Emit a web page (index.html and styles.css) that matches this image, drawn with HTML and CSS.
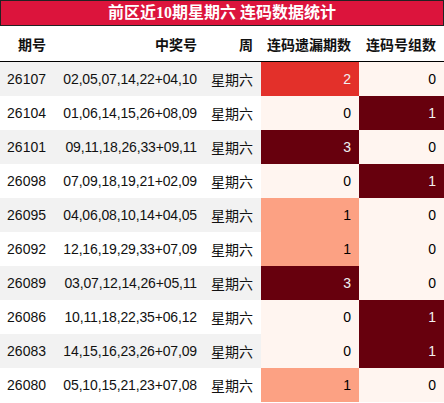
FILE: index.html
```
<!DOCTYPE html>
<html lang="zh">
<head>
<meta charset="utf-8">
<link rel="stylesheet" href="styles.css">
</head>
<body>
<div class="wrap">
  <div class="title">前区近10期星期六 连码数据统计</div>
  <table class="stats">
    <colgroup>
      <col class="c1"><col class="c2"><col class="c3"><col class="c4"><col class="c5">
    </colgroup>
    <thead>
      <tr><th>期号</th><th>中奖号</th><th>周</th><th>连码遗漏期数</th><th>连码号组数</th></tr>
    </thead>
    <tbody>
      <tr><td>26107</td><td class="nums">02,05,07,14,22+04,10</td><td>星期六</td><td class="h2">2</td><td class="h0">0</td></tr>
      <tr><td>26104</td><td class="nums">01,06,14,15,26+08,09</td><td>星期六</td><td class="h0">0</td><td class="h3">1</td></tr>
      <tr><td>26101</td><td class="nums">09,11,18,26,33+09,11</td><td>星期六</td><td class="h3">3</td><td class="h0">0</td></tr>
      <tr><td>26098</td><td class="nums">07,09,18,19,21+02,09</td><td>星期六</td><td class="h0">0</td><td class="h3">1</td></tr>
      <tr><td>26095</td><td class="nums">04,06,08,10,14+04,05</td><td>星期六</td><td class="h1">1</td><td class="h0">0</td></tr>
      <tr><td>26092</td><td class="nums">12,16,19,29,33+07,09</td><td>星期六</td><td class="h1">1</td><td class="h0">0</td></tr>
      <tr><td>26089</td><td class="nums">03,07,12,14,26+05,11</td><td>星期六</td><td class="h3">3</td><td class="h0">0</td></tr>
      <tr><td>26086</td><td class="nums">10,11,18,22,35+06,12</td><td>星期六</td><td class="h0">0</td><td class="h3">1</td></tr>
      <tr><td>26083</td><td class="nums">14,15,16,23,26+07,09</td><td>星期六</td><td class="h0">0</td><td class="h3">1</td></tr>
      <tr><td>26080</td><td class="nums">05,10,15,21,23+07,08</td><td>星期六</td><td class="h1">1</td><td class="h0">0</td></tr>
    </tbody>
  </table>
</div>
</body>
</html>
```
FILE: styles.css
```
html, body {
  margin: 0;
  padding: 0;
  background: #ffffff;
}
.wrap {
  width: 444px;
  font-family: "Liberation Sans", "Noto Sans CJK SC", sans-serif;
  color: #111;
}
.title {
  box-sizing: border-box;
  height: 26px;
  border: 1px solid #222;
  background: #dc143c;
  color: #fff;
  font-family: "Liberation Serif", "Noto Sans CJK SC", serif;
  font-weight: bold;
  font-size: 16px;
  line-height: 24px;
  text-align: center;
}
.stats {
  width: 444px;
  border-collapse: collapse;
  table-layout: fixed;
  font-size: 14px;
}
.c1 { width: 54px; }
.c2 { width: 151px; }
.c3 { width: 56px; }
.c4 { width: 98px; }
.c5 { width: 85px; }
.stats th {
  height: 35px;
  padding: 0 8px 0 0;
  text-align: right;
  font-weight: bold;
  border-bottom: 1px solid #000;
  background: #fff;
}
.stats td {
  height: 34px;
  padding: 0 8px 0 0;
  text-align: right;
  white-space: nowrap;
}
.stats td.nums { letter-spacing: -0.15px; }
.stats tbody tr:nth-child(odd) td { background: #f2f2f2; }
.stats tbody tr:nth-child(even) td { background: #fff; }
.stats tbody tr td.h0 { background: #fff5f0; color: #000; }
.stats tbody tr td.h1 { background: #fca183; color: #000; }
.stats tbody tr td.h2 { background: #e3302a; color: #f1f1f1; }
.stats tbody tr td.h3 { background: #67000d; color: #f1f1f1; }
```
